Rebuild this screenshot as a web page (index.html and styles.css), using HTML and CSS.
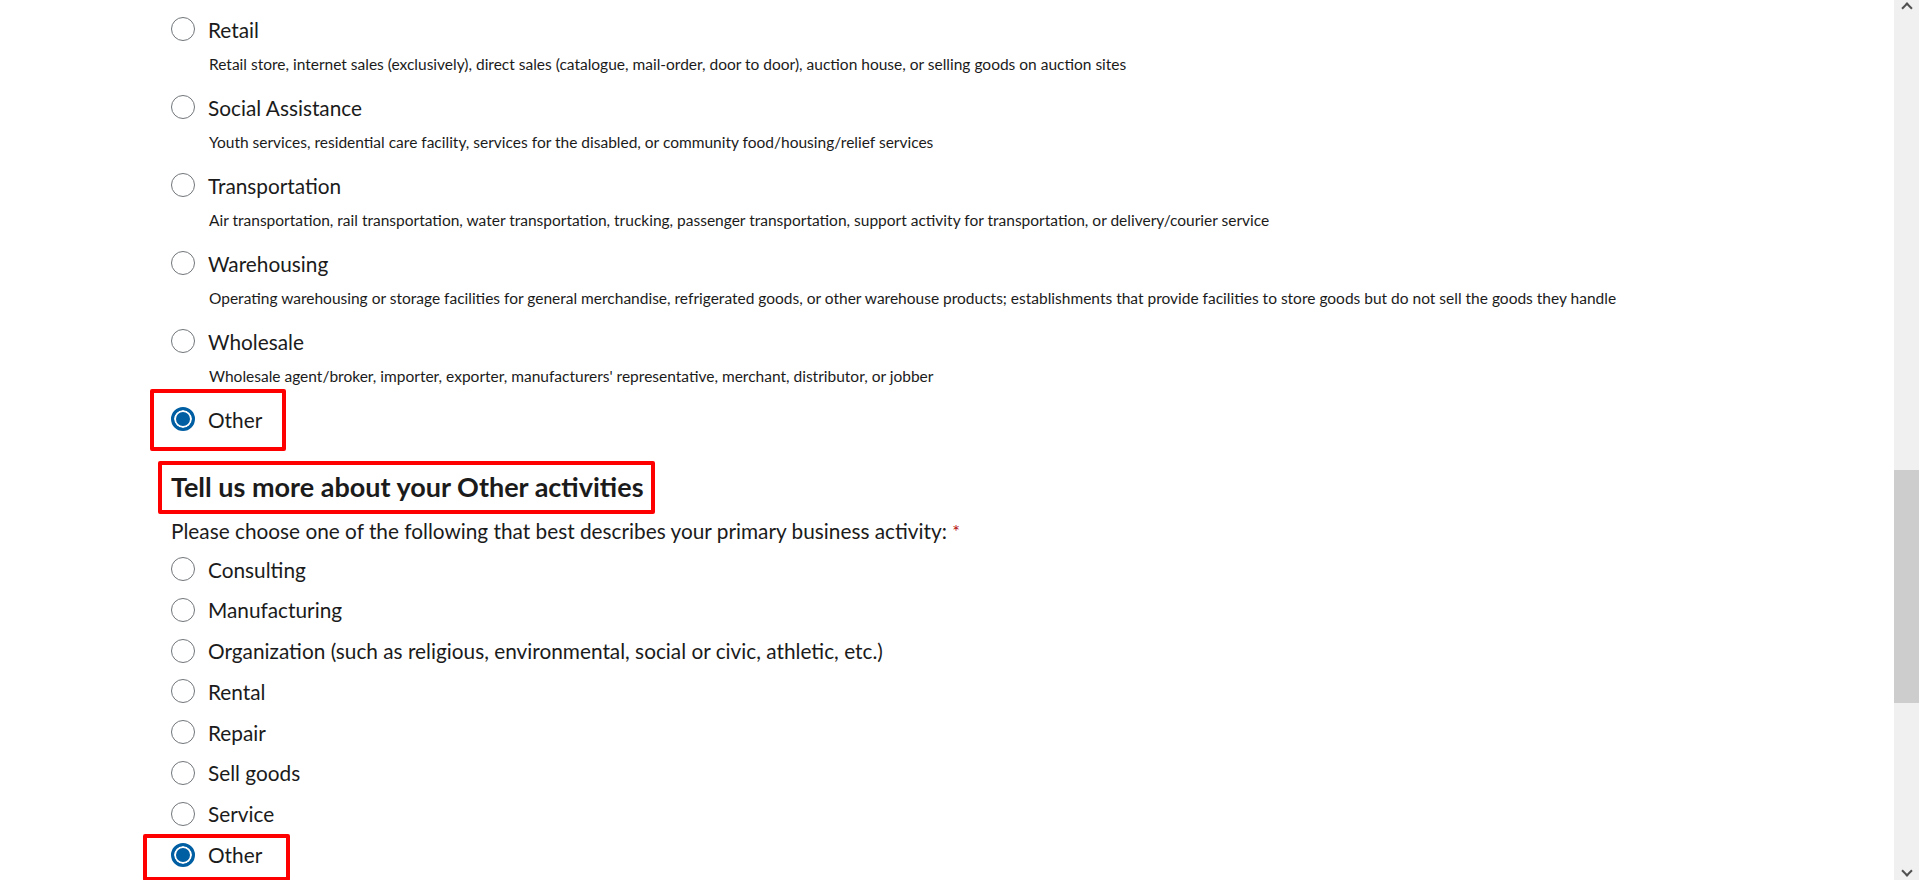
FILE: index.html
```html
<!DOCTYPE html>
<html lang="en">
<head>
    <meta charset="UTF-8">
    <meta name="viewport" content="width=device-width, initial-scale=1.0">
    <title>Business activity</title>
    <link rel="stylesheet" href="styles.css">
</head>
<body>
    <div class="form">
        <!-- primary activity list (scrolled part) -->
        <div class="options">
            <div class="option">
                <label class="option-row"><span class="radio"></span><span class="option-label">Retail</span></label>
                <p class="option-desc">Retail store, internet sales (exclusively), direct sales (catalogue, mail-order, door to door), auction house, or selling goods on auction sites</p>
            </div>
            <div class="option">
                <label class="option-row"><span class="radio"></span><span class="option-label">Social Assistance</span></label>
                <p class="option-desc">Youth services, residential care facility, services for the disabled, or community food/housing/relief services</p>
            </div>
            <div class="option">
                <label class="option-row"><span class="radio"></span><span class="option-label">Transportation</span></label>
                <p class="option-desc">Air transportation, rail transportation, water transportation, trucking, passenger transportation, support activity for transportation, or delivery/courier service</p>
            </div>
            <div class="option">
                <label class="option-row"><span class="radio"></span><span class="option-label">Warehousing</span></label>
                <p class="option-desc">Operating warehousing or storage facilities for general merchandise, refrigerated goods, or other warehouse products; establishments that provide facilities to store goods but do not sell the goods they handle</p>
            </div>
            <div class="option">
                <label class="option-row"><span class="radio"></span><span class="option-label">Wholesale</span></label>
                <p class="option-desc">Wholesale agent/broker, importer, exporter, manufacturers' representative, merchant, distributor, or jobber</p>
            </div>
            <div class="option">
                <label class="option-row marked marked-first"><span class="radio checked"></span><span class="option-label">Other</span></label>
            </div>
        </div>

        <h2 class="section-title"><span class="marked marked-title">Tell us more about your Other activities</span></h2>
        <p class="question">Please choose one of the following that best describes your primary business activity: <span class="required">*</span></p>

        <div class="sub-options">
            <label class="option-row"><span class="radio"></span><span class="option-label">Consulting</span></label>
            <label class="option-row"><span class="radio"></span><span class="option-label">Manufacturing</span></label>
            <label class="option-row"><span class="radio"></span><span class="option-label">Organization (such as religious, environmental, social or civic, athletic, etc.)</span></label>
            <label class="option-row"><span class="radio"></span><span class="option-label">Rental</span></label>
            <label class="option-row"><span class="radio"></span><span class="option-label">Repair</span></label>
            <label class="option-row"><span class="radio"></span><span class="option-label">Sell goods</span></label>
            <label class="option-row"><span class="radio"></span><span class="option-label">Service</span></label>
            <label class="option-row marked marked-last"><span class="radio checked"></span><span class="option-label">Other</span></label>
        </div>
    </div>

    <!-- page scrollbar -->
    <div class="scrollbar">
        <span class="arrow arrow-up"></span>
        <div class="thumb"></div>
        <span class="arrow arrow-down"></span>
    </div>
</body>
</html>
```

FILE: styles.css
```css
html, body {
    margin: 0;
    height: 100%;
    overflow: hidden;
    background-color: #fff;
}
body {
    font-family: Lato, "Noto Sans", sans-serif;
    color: #1b1b1b;
}
.form {
    padding: 13px 0 0 171px;
}
.option {
    margin-bottom: 16px;
}
.option-row {
    display: flex;
    align-items: center;
    height: 32px;
    width: max-content;
    position: relative;
}
.option-label {
    font-size: 20.8px;
    margin-left: 13px;
}
.option-desc {
    margin: 8px 0 0 38px;
    font-size: 15.5px;
    line-height: 22px;
}
.radio {
    box-sizing: border-box;
    width: 24px;
    height: 24px;
    border-radius: 50%;
    border: 1.5px solid #71767a;
    background-color: #fff;
    flex-shrink: 0;
}
.radio.checked {
    border: 3px solid #005ea2;
    background-color: #005ea2;
    box-shadow: inset 0 0 0 2px #fff;
}
.section-title {
    margin: 36px 0 0;
    font-size: 27px;
    line-height: 32px;
    font-weight: 700;
}
.marked-title {
    position: relative;
    display: inline-block;
}
.question {
    margin: 14px 0 8px;
    font-size: 20.8px;
    line-height: 28px;
}
.required {
    color: #b50909;
    font-size: 18px;
    vertical-align: top;
}
.sub-options .option-row {
    margin-bottom: 8.8px;
}

/* red annotation boxes */
.marked::after {
    content: "";
    position: absolute;
    border: 4px solid #f00;
    border-radius: 2px;
}
.marked-first::after {
    top: -14px;
    bottom: -16px;
    left: -21px;
    right: -24px;
}
.marked-title::after {
    top: -10px;
    bottom: -11px;
    left: -13px;
    right: -11px;
}
.marked-last::after {
    top: -5px;
    bottom: -10px;
    left: -28px;
    right: -28px;
}

.scrollbar {
    position: fixed;
    top: 0;
    right: 0;
    width: 25px;
    height: 100%;
    background-color: #f0f0f0;
}
.thumb {
    position: absolute;
    top: 470px;
    left: 0;
    width: 100%;
    height: 233px;
    background-color: #cdcdcd;
}
.arrow {
    position: absolute;
    left: 9px;
    width: 6px;
    height: 6px;
    border-left: 2px solid #505050;
    border-top: 2px solid #505050;
}
.arrow-up {
    top: 4px;
    transform: rotate(45deg);
}
.arrow-down {
    bottom: 5px;
    transform: rotate(225deg);
}
```
